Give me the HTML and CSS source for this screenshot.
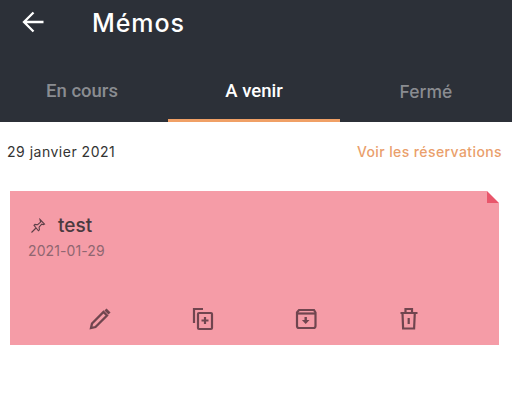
FILE: index.html
```html
<!DOCTYPE html>
<html lang="fr">
<head>
    <meta charset="UTF-8">
    <title>Mémos</title>
    <link rel="stylesheet" href="styles.css">
</head>
<body>
    <header class="header">
        <div class="title-row">
            <svg class="back" width="24" height="24" viewBox="0 0 24 24" fill="none" stroke="#fff" stroke-width="2.3">
                <path d="M21.500 12H3M11.500 2.500L2 12l9.500 9.500"/>
            </svg>
            <h1>Mémos</h1>
        </div>
        <nav class="tabs">
            <div class="tab tab-roboto tab-first">En cours</div>
            <div class="tab tab-roboto active">A venir</div>
            <div class="tab">Fermé</div>
        </nav>
    </header>
    <div class="date-row">
        <span class="date">29 janvier 2021</span>
        <a class="link">Voir les réservations</a>
    </div>
    <div class="memo">
        <div class="fold"></div>
        <div class="memo-title">
            <svg class="pin" width="16" height="16" viewBox="0 0 16 16" fill="none" stroke="#5d3f47" stroke-width="1.1">
                <path d="M10 1.500l4.500 4.500-1.200.6-1.600-.4-2.600 3 .3 2.600-1 1L4 7.400l1-1 2.600.3 3-2.600-.4-1.600zM6 10l-4.500 4.500"/>
            </svg>
            <span>test</span>
        </div>
        <div class="memo-date">2021-01-29</div>
        <div class="actions">
            <svg width="24" height="24" viewBox="0 0 24 24" fill="none" stroke="#70454f" stroke-width="2.300">
                <path d="M3 21l1-4.500L15.500 5l3.500 3.500L7.500 20z"/>
                <path d="M17.500 2.500l4 4" stroke-width="3"/>
            </svg>
            <svg width="24" height="24" viewBox="0 0 24 24" fill="none" stroke="#70454f" stroke-width="2.200">
                <path d="M12 2H3v14"/>
                <rect x="7" y="6" width="14" height="16" rx="1"/>
                <path d="M14 10v7M10.500 13.500h7"/>
            </svg>
            <svg width="24" height="24" viewBox="0 0 24 24" fill="none" stroke="#70454f" stroke-width="2.200">
                <path d="M5 3h15l1.500 2.500V19a2 2 0 0 1-2 2H5a2 2 0 0 1-2-2V5.500z"/>
                <path d="M3 6.500h18"/>
                <path d="M10.500 10h2.400v3h2.600L11.700 17l-3.800-4h2.600z" fill="#70454f" stroke="none"/>
            </svg>
            <svg width="24" height="24" viewBox="0 0 24 24" fill="none" stroke="#70454f" stroke-width="2.200">
                <path d="M3.500 6h17M8.500 6V2h6.500v4M5.500 6l.6 15.500h11L17.800 6M11.700 11v6"/>
            </svg>
        </div>
    </div>
</body>
</html>
```

FILE: styles.css
```css
body {
    margin: 0;
    background: #fff;
    font-family: "Inter", "Liberation Sans", sans-serif;
}
.header {
    background: #2c3038;
    height: 122px;
    display: flex;
    flex-direction: column;
}
.title-row {
    height: 62px;
    padding: 0 0 18px 22px;
    box-sizing: border-box;
    display: flex;
    align-items: center;
}
.back {
    display: block;
}
h1 {
    margin: 2px 0 0 46px;
    color: #fff;
    font-size: 25px;
    font-weight: 500;
    letter-spacing: 0.9px;
}
.tabs {
    flex: 1;
    display: grid;
    grid-template-columns: 168px 172px 172px;
}
.tab {
    display: flex;
    align-items: center;
    justify-content: center;
    color: #8a8c91;
    font-size: 17.500px;
    font-weight: 500;
    padding-top: 1px;
    border-bottom: 3px solid transparent;
}
.tab-roboto {
    font-family: Roboto, sans-serif;
    font-size: 18.500px;
}
.tab-first {
    padding-right: 4px;
}
.tab.active {
    color: #fff;
    border-bottom-color: #f0a066;
}
.date-row {
    display: flex;
    justify-content: space-between;
    padding: 21px 10px 0 7px;
    height: 48px;
    font-size: 14px;
    line-height: 17px;
    letter-spacing: 0.5px;
}
.date {
    color: #333;
}
.link {
    color: #ea9f6c;
    font-weight: 500;
    letter-spacing: 0.4px;
}
.memo {
    position: relative;
    margin: 0 13px 0 10px;
    height: 154px;
    background: #f59ca7;
    box-sizing: border-box;
    padding: 23px 18px 0;
    display: flex;
    flex-direction: column;
}
.fold {
    position: absolute;
    top: 0;
    right: 0;
    border-style: solid;
    border-width: 12px 0 0 12px;
    border-color: #fff transparent transparent #e9566b;
    width: 0;
    height: 0;
}
.memo-title {
    display: flex;
    align-items: center;
    gap: 12px;
    color: #4a3a40;
    font-size: 19px;
    font-weight: 500;
    line-height: 24px;
    padding-left: 2px;
}
.memo-date {
    color: #8f6670;
    font-size: 14px;
    line-height: 18px;
    letter-spacing: 0.1px;
    margin-top: 4px;
}
.actions {
    margin: auto 0 0 60px;
    padding-bottom: 14px;
    display: flex;
    gap: 79px;
}
```
